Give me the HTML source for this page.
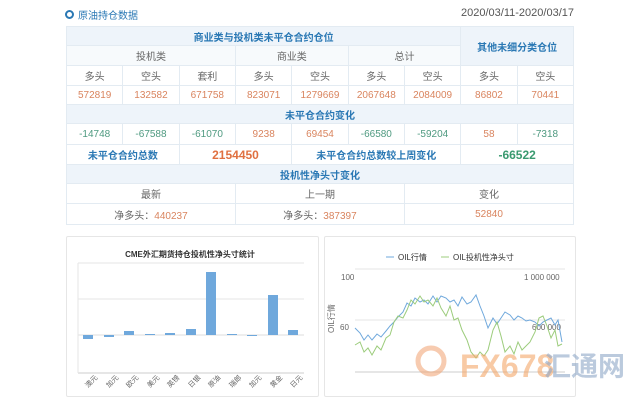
<!DOCTYPE html>
<html><head><meta charset="utf-8"><style>
body{margin:0;width:640px;height:400px;background:#fff;font-family:"Liberation Sans","Noto Sans CJK SC",sans-serif;position:relative;overflow:hidden}
.t{position:absolute;font-size:11px}
table{position:absolute;left:66px;top:26px;width:508px;border-collapse:collapse;table-layout:fixed;font-size:10px;text-align:center}
td{border:1px solid #e3ebf2;height:18px;padding:0;color:#666}
.h{background:#eef4fa;color:#2a78b4;font-weight:bold}
.o{color:#d9845e}.g{color:#4f9a80}
.panel{position:absolute;border:1px solid #e6e6e6;border-radius:2px;background:#fff}
</style></head><body>
<div class="t" style="left:65px;top:7px;color:#2a78b4;font-size:10px"><span style="display:inline-block;width:5px;height:5px;border:2px solid #2a78b4;border-radius:50%;margin-right:4px;vertical-align:0px"></span>原油持仓数据</div>
<div class="t" style="right:66px;top:7px;color:#555;font-size:11px">2020/03/11-2020/03/17</div>
<table>
<colgroup><col><col><col><col><col><col><col><col><col></colgroup>
<tr style="height:19px"><td class="h" colspan="7">商业类与投机类未平仓合约仓位</td><td class="h" colspan="2" rowspan="2">其他未细分类仓位</td></tr>
<tr style="height:20px"><td colspan="3" style="background:#f7fafc">投机类</td><td colspan="2" style="background:#f7fafc">商业类</td><td colspan="2" style="background:#f7fafc">总计</td></tr>
<tr style="height:20px"><td>多头</td><td>空头</td><td>套利</td><td>多头</td><td>空头</td><td>多头</td><td>空头</td><td>多头</td><td>空头</td></tr>
<tr style="height:19px" class="o"><td class="o">572819</td><td class="o">132582</td><td class="o">671758</td><td class="o">823071</td><td class="o">1279669</td><td class="o">2067648</td><td class="o">2084009</td><td class="o">86802</td><td class="o">70441</td></tr>
<tr style="height:18px"><td class="h" colspan="9">未平仓合约变化</td></tr>
<tr style="height:21px"><td class="g">-14748</td><td class="g">-67588</td><td class="g">-61070</td><td class="o">9238</td><td class="o">69454</td><td class="g">-66580</td><td class="g">-59204</td><td class="o">58</td><td class="g">-7318</td></tr>
<tr style="height:20px"><td colspan="2" style="color:#2a78b4;font-weight:bold">未平仓合约总数</td><td colspan="2" style="color:#e07040;font-weight:bold;font-size:12px">2154450</td><td colspan="3" style="color:#2a78b4;font-weight:bold">未平仓合约总数较上周变化</td><td colspan="2" style="color:#3a9a70;font-weight:bold;font-size:12px">-66522</td></tr>
<tr style="height:19px"><td class="h" colspan="9">投机性净头寸变化</td></tr>
<tr style="height:20px"><td colspan="3">最新</td><td colspan="3">上一期</td><td colspan="3">变化</td></tr>
<tr style="height:21px"><td colspan="3">净多头：<span class="o">440237</span></td><td colspan="3">净多头：<span class="o">387397</span></td><td colspan="3" class="o">52840</td></tr>
</table>
<div class="panel" style="left:66px;top:236px;width:251px;height:159px"></div>
<div class="panel" style="left:324px;top:236px;width:250px;height:159px"></div>
<svg style="position:absolute;left:0;top:0" width="640" height="400">
<text x="190" y="257" font-size="8" text-anchor="middle" fill="#333" font-weight="bold" font-family="Liberation Sans,Noto Sans CJK SC,sans-serif">CME外汇期货持仓投机性净头寸统计</text>
<g stroke="#e6e6e6"><line x1="78" y1="263" x2="304" y2="263"/><line x1="78" y1="299" x2="304" y2="299"/><line x1="78" y1="335" x2="304" y2="335" stroke="#ddd"/><line x1="78" y1="373" x2="304" y2="373" stroke="#ccc"/><line x1="78" y1="263" x2="78" y2="373"/></g>
<g fill="#6fa8dc">
<rect x="83" y="335" width="10" height="4"/><rect x="104" y="335" width="10" height="2"/><rect x="124" y="331" width="10" height="4"/><rect x="145" y="334" width="10" height="1"/><rect x="165" y="333" width="10" height="2"/><rect x="186" y="329" width="10" height="6"/><rect x="206" y="272" width="10" height="63"/><rect x="227" y="334" width="10" height="1"/><rect x="247" y="335" width="10" height="1"/><rect x="268" y="295" width="10" height="40"/><rect x="288" y="330" width="10" height="5"/>
</g>
<g font-size="7" fill="#666" font-family="Liberation Sans,Noto Sans CJK SC,sans-serif">
<text transform="translate(88,388) rotate(-45)">澳元</text><text transform="translate(109,388) rotate(-45)">加元</text><text transform="translate(129,388) rotate(-45)">欧元</text><text transform="translate(150,388) rotate(-45)">美元</text><text transform="translate(170,388) rotate(-45)">英镑</text><text transform="translate(191,388) rotate(-45)">日银</text><text transform="translate(211,388) rotate(-45)">原油</text><text transform="translate(232,388) rotate(-45)">瑞郎</text><text transform="translate(252,388) rotate(-45)">加元</text><text transform="translate(273,388) rotate(-45)">黄金</text><text transform="translate(293,388) rotate(-45)">日元</text>
</g>
<line x1="386" y1="257" x2="394" y2="257" stroke="#6fa8dc"/><text x="398" y="260" font-size="8" fill="#333" font-family="Liberation Sans,Noto Sans CJK SC,sans-serif">OIL行情</text>
<line x1="441" y1="257" x2="449" y2="257" stroke="#9ccc7c"/><text x="453" y="260" font-size="8" fill="#333" font-family="Liberation Sans,Noto Sans CJK SC,sans-serif">OIL投机性净头寸</text>
<g stroke="#e6e6e6"><line x1="355" y1="269" x2="565" y2="269"/><line x1="355" y1="320" x2="565" y2="320"/><line x1="355" y1="372" x2="565" y2="372" stroke="#ccc"/></g>
<text x="341" y="280" font-size="8" fill="#666">100</text><text x="524" y="280" font-size="8" fill="#666">1 000 000</text>
<text x="340" y="330" font-size="8" fill="#666">60</text><text x="532" y="330" font-size="8" fill="#666">600 000</text>
<text transform="translate(334,333) rotate(-90)" font-size="8" fill="#666" font-family="Liberation Sans,Noto Sans CJK SC,sans-serif">OIL行情</text>
<polyline fill="none" stroke="#6fa8dc" stroke-width="1" points="355,328 360,333 364,340 368,335 372,340 377,334 381,337 386,331 390,326 394,322 398,317 403,312 407,303 411,306 415,298 420,302 424,300 428,304 433,296 437,302 441,296 446,298 450,302 454,300 458,306 462,297 467,304 471,302 476,295 480,306 484,316 488,328 493,318 497,324 501,318 505,312 510,315 514,320 518,316 522,318 526,321 530,320 535,322 539,326 543,322 547,320 551,318 555,325 558,320 562,342"/>
<polyline fill="none" stroke="#9ccc7c" stroke-width="1" points="355,345 360,342 364,352 368,348 372,355 377,346 381,350 386,338 390,335 394,322 398,316 403,318 407,310 411,300 415,304 420,296 424,302 428,300 433,306 437,298 441,308 446,316 450,306 454,320 458,318 462,330 467,340 471,352 476,358 480,352 484,356 488,350 493,330 497,322 501,336 505,352 510,346 514,354 518,342 522,350 526,346 530,342 535,332 539,318 543,316 547,326 551,338 555,330 558,346 562,344"/>
<circle cx="431" cy="361" r="13" fill="none" stroke="#f0a070" stroke-width="5" opacity=".55"/>
<text x="460" y="377" font-size="32" font-weight="bold" fill="#f4a86a" opacity=".6" font-family="Liberation Sans,sans-serif">FX678</text>
<text x="544" y="376" font-size="27" font-weight="bold" fill="#8fa8c8" opacity=".6" font-family="Noto Sans CJK SC,sans-serif">汇通网</text>
</svg>
</body></html>
